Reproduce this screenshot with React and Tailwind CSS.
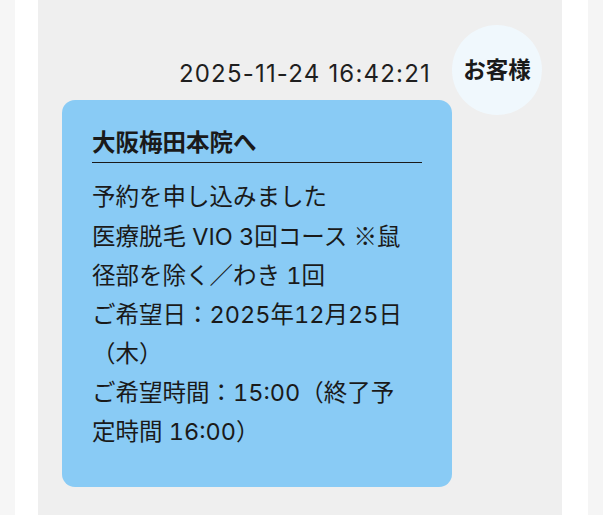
import React from 'react';

const cjk = { fontFamily: '"Noto Sans CJK JP", sans-serif' };

const App = () => {
  return (
    <div
      className="flex min-h-[515px] w-full bg-[#f6f6f6] text-[#1a1a1a]"
      style={{ fontFamily: 'Inter, "Noto Sans CJK JP", sans-serif' }}
    >
      <div className="w-[15px] shrink-0" />
      <div className="w-[23px] shrink-0 bg-white" />

      {/* Chat panel */}
      <div className="flex w-[524px] shrink-0 items-start bg-[#efefef] pl-[24px] pr-[20px] pt-[25px]">
        <div className="flex w-[390px] flex-col pt-[33px]">
          <div className="flex justify-end pr-[21px] text-[24px] leading-[32px] tracking-[1.2px] text-[#1f1f1f]">
            2025-11-24 16:42:21
          </div>
          <div className="mt-[10px] h-[387px] rounded-[13px] bg-[#89cbf5] px-[30px] pt-[24px]">
            <div className="border-b-[1.5px] border-[#1a1a1a] text-[23.5px] font-bold leading-[38px]">
              大阪梅田本院へ
            </div>
            <div className="mr-[6px] mt-[14px] text-[23.5px] leading-[39px] tabular-nums">
              <p>予約を申し込みました</p>
              <p>
                医療脱毛 VIO 3回コース <span style={cjk}>※鼠</span>径部を除く／わき 1回
              </p>
              <p>ご希望日：2025年12月25日（木）</p>
              <p>ご希望時間：15:00（終了予定時間 16:00）</p>
            </div>
          </div>
        </div>

        {/* Avatar */}
        <div className="flex h-[90px] w-[90px] shrink-0 items-center justify-center rounded-full bg-[#f0f8fd] text-[22.5px] font-bold">
          お客様
        </div>
      </div>

      <div className="w-[26px] shrink-0 bg-white" />
      <div className="flex-1 bg-[#f5f5f5]" />
    </div>
  );
};

export default App;
